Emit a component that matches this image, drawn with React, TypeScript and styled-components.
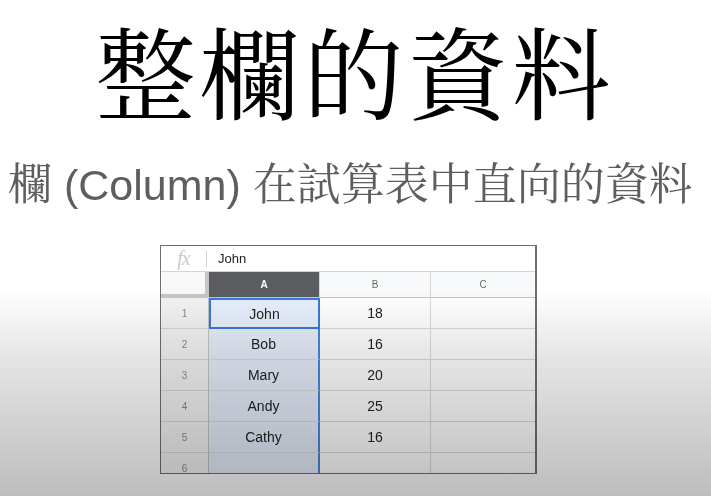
import styled, { createGlobalStyle } from 'styled-components';

const GlobalStyle = createGlobalStyle`
  html, body {
    margin: 0;
    padding: 0;
    background: #ffffff;
  }
  body {
    width: 711px;
    height: 496px;
    overflow: hidden;
  }
`;

// 슬라이드 전체
const Slide = styled.div`
  position: relative;
  width: 711px;
  height: 496px;
  display: flex;
  flex-direction: column;
  background: #ffffff;
  overflow: hidden;
`;

// 하단 그늘 (영상 캡처의 어두운 그라데이션)
const Shade = styled.div`
  position: absolute;
  inset: 0;
  pointer-events: none;
  background: linear-gradient(
    to bottom,
    rgba(255, 255, 255, 0) 0px,
    rgba(255, 255, 255, 0) 290px,
    #e4e4e4 360px,
    #bdbdbd 496px
  );
  mix-blend-mode: multiply;
`;

const Title = styled.h1`
  margin: 0;
  height: 136px;
  text-align: center;
  font-family: 'Noto Serif CJK TC', 'Noto Serif CJK SC', 'Liberation Serif', 'Noto Sans CJK TC', serif;
  font-weight: 400;
  font-size: 100px;
  line-height: 138px;
  color: #000;
  letter-spacing: 4px;
`;

const Subtitle = styled.p`
  margin: 0;
  height: 109px;
  padding: 0 0 12px 8px;
  display: flex;
  align-items: center;
  box-sizing: border-box;
  font-family: 'Liberation Sans', 'Noto Serif CJK TC', 'Noto Sans CJK TC', sans-serif;
  font-size: 43px;
  line-height: 62px;
  color: #5e5e5e;
  white-space: nowrap;
`;

// 한자 부분은 약간 넓게
const Han = styled.span`
  font-size: 44px;
`;

const Sheet = styled.div`
  margin-left: 160px;
  width: 377px;
  height: 229px;
  border: 1px solid #6f6f6f;
  border-right-width: 2px;
  box-sizing: border-box;
  background: #fff;
  overflow: hidden;
  font-family: 'Liberation Sans', Arial, sans-serif;
`;

const FormulaBar = styled.div`
  height: 25px;
  display: flex;
  align-items: center;
  border-bottom: 1px solid #d4d4d4;
`;

const Fx = styled.span`
  width: 45px;
  text-align: center;
  font-family: 'Liberation Serif', serif;
  font-style: italic;
  font-size: 20px;
  color: #cacaca;
  letter-spacing: -1px;
`;

const Divider = styled.span`
  width: 1px;
  height: 16px;
  background: #d0d0d0;
  margin-right: 11px;
`;

const FormulaValue = styled.span`
  font-size: 13px;
  color: #222;
`;

const Grid = styled.div`
  display: grid;
  grid-template-columns: 48px 111px 111px 105px;
  grid-template-rows: 26px repeat(5, 31px) 31px;
`;

const Corner = styled.div`
  background: #f8f8f8;
  border-right: 4px solid #c6c6c6;
  border-bottom: 4px solid #c6c6c6;
  box-sizing: border-box;
`;

const ColHead = styled.div<{ $active?: boolean }>`
  display: flex;
  align-items: center;
  justify-content: center;
  font-size: 10px;
  color: ${p => (p.$active ? '#ffffff' : '#6b6b6b')};
  font-weight: ${p => (p.$active ? 700 : 400)};
  background: ${p => (p.$active ? '#5b5d61' : '#f8f9fa')};
  border-right: 1px solid #d6d6d6;
  border-bottom: 1px solid #c4c4c4;
  box-sizing: border-box;
`;

const RowHead = styled.div`
  display: flex;
  align-items: center;
  justify-content: center;
  font-size: 10px;
  color: #8a8a8a;
  background: #f3f3f3;
  border-right: 1px solid #c4c4c4;
  border-bottom: 1px solid #d6d6d6;
  box-sizing: border-box;
`;

const Cell = styled.div<{ $col?: 'a' | 'b' | 'c'; $current?: boolean }>`
  display: flex;
  align-items: center;
  justify-content: center;
  font-size: 14px;
  color: #222;
  box-sizing: border-box;
  background: ${p => (p.$col === 'a' ? '#e6eefb' : '#ffffff')};
  border-bottom: 1px solid #dadada;
  border-right: ${p => (p.$col === 'a' ? '2px solid #4a86e0' : '1px solid #dadada')};
  ${p =>
    p.$current &&
    `
    border: 2px solid #3b78e0;
    background: #e8f0fd;
  `}
`;

const rows = [
  { n: 1, name: 'John', age: '18' },
  { n: 2, name: 'Bob', age: '16' },
  { n: 3, name: 'Mary', age: '20' },
  { n: 4, name: 'Andy', age: '25' },
  { n: 5, name: 'Cathy', age: '16' },
  { n: 6, name: '', age: '' },
];

export default function App() {
  return (
    <>
      <GlobalStyle />
      <Slide>
        <Title>整欄的資料</Title>
        <Subtitle>
          <Han>欄</Han>&nbsp;(Column)&nbsp;<Han>在試算表中直向的資料</Han>
        </Subtitle>
        <Sheet>
          <FormulaBar>
            <Fx>fx</Fx>
            <Divider />
            <FormulaValue>John</FormulaValue>
          </FormulaBar>
          <Grid>
            <Corner />
            <ColHead $active>A</ColHead>
            <ColHead>B</ColHead>
            <ColHead>C</ColHead>
            {rows.map(r => (
              <>
                <RowHead key={`h${r.n}`}>{r.n}</RowHead>
                <Cell key={`a${r.n}`} $col="a" $current={r.n === 1}>
                  {r.name}
                </Cell>
                <Cell key={`b${r.n}`} $col="b">{r.age}</Cell>
                <Cell key={`c${r.n}`} $col="c" />
              </>
            ))}
          </Grid>
        </Sheet>
        <Shade />
      </Slide>
    </>
  );
}
